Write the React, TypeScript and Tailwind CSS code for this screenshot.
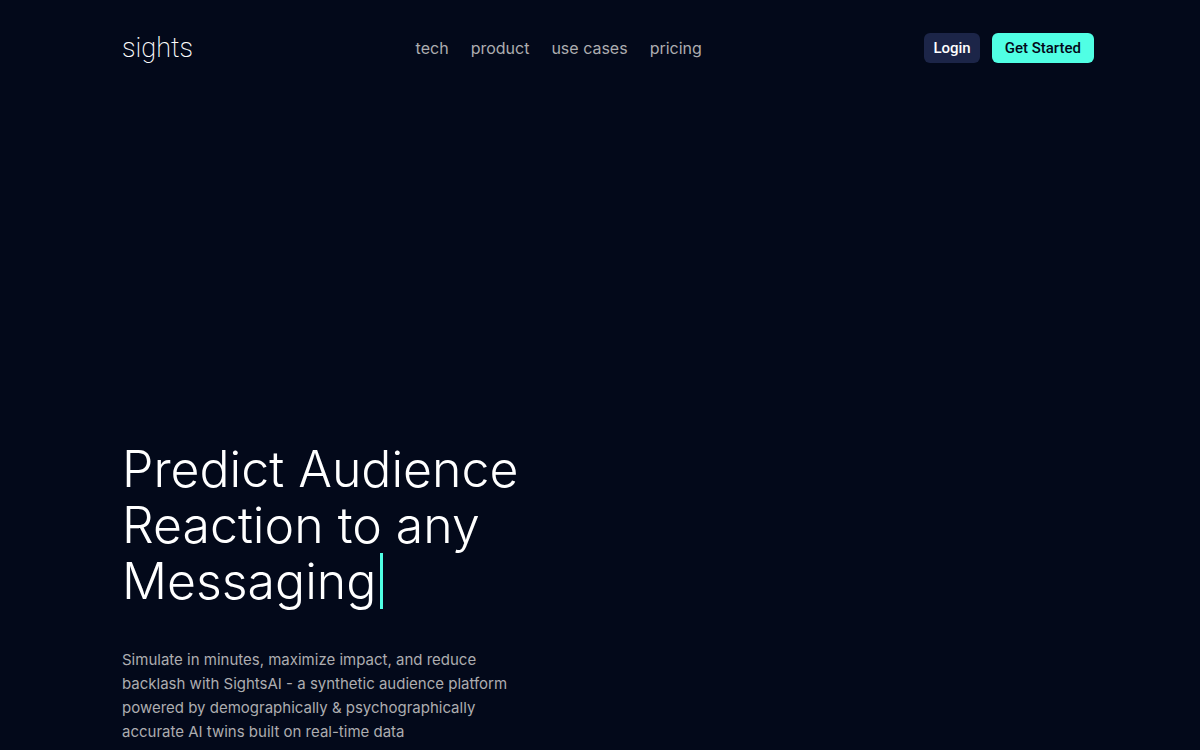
const links = ["tech", "product", "use cases", "pricing"];

function Header() {
  return (
    <header className="flex h-24 items-center justify-between">
      <a
        href="#home"
        className="font-['Roboto',sans-serif] text-[27px] leading-8 font-extralight text-white"
      >
        sights
      </a>
      <nav aria-label="Main" className="flex items-center gap-[22px]">
        {links.map((label) => (
          <a
            key={label}
            href={`#${label.replace(" ", "-")}`}
            className="font-['Inter',sans-serif] text-base text-[#adadb0] hover:text-white"
          >
            {label}
          </a>
        ))}
      </nav>
      <div className="flex items-center gap-3 font-['Roboto',sans-serif] text-[15px] font-medium">
        <button type="button" className="h-[30px] rounded-md bg-[#1c2548] px-[9px] text-white">
          Login
        </button>
        <button type="button" className="h-[30px] rounded-md bg-[#50ffe4] px-[13px] text-[#030819]">
          Get Started
        </button>
      </div>
    </header>
  );
}

export default function App() {
  return (
    <div className="min-h-screen bg-[#03091a] pr-[106px] pl-[122px]">
      <Header />
      <main className="pt-[345px]">
        <h1 className="font-['Inter',sans-serif] text-[50px] leading-[56px] font-light text-white">
          Predict Audience
          <br />
          Reaction to any
          <br />
          <span className="inline-flex items-center gap-1">
            Messaging
            <span aria-hidden="true" className="h-14 w-[3px] bg-[#50ffe4]" />
          </span>
        </h1>
        <p className="mt-[39px] font-['Inter',sans-serif] text-[15px] leading-6 text-[#adadb0]">
          Simulate in minutes, maximize impact, and reduce
          <br />
          backlash with SightsAI - a synthetic audience platform
          <br />
          powered by demographically &amp; psychographically
          <br />
          accurate AI twins built on real-time data
        </p>
      </main>
    </div>
  );
}
